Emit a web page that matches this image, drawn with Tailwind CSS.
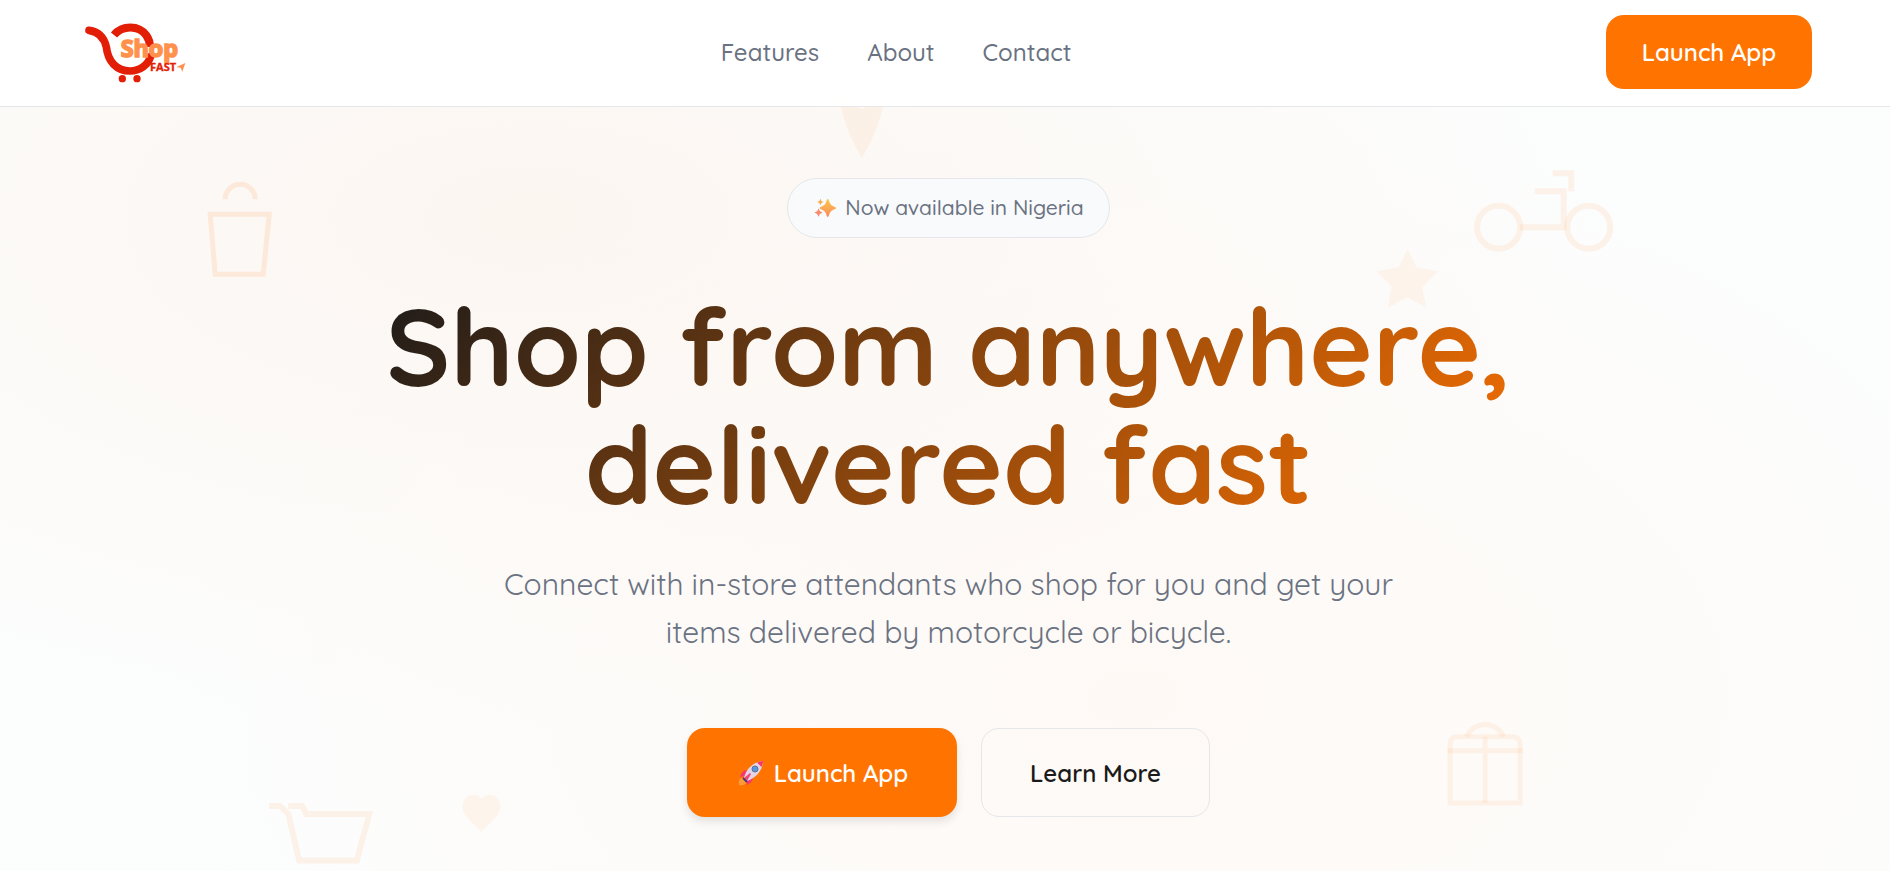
<!DOCTYPE html>
<html lang="en">
<head>
    <meta charset="UTF-8">
    <meta name="viewport" content="width=device-width, initial-scale=1.0">
    <title>ShopFast</title>
    <script src="https://cdn.jsdelivr.net/npm/@tailwindcss/browser@4"></script>
</head>
<body class="font-['Quicksand','Lato',sans-serif] bg-[#fcfdfd] text-gray-500">

    <div class="relative min-h-screen overflow-hidden bg-[radial-gradient(ellipse_at_28%_25%,#fcf6f1_0%,transparent_55%),radial-gradient(ellipse_at_60%_80%,#fef9f5_0%,transparent_60%)]">

        <!-- faint shopping doodles behind the hero -->
        <svg class="absolute inset-0 w-full h-full" viewBox="0 0 1890 871" preserveAspectRatio="xMidYMin slice" fill="none" stroke-width="5" aria-hidden="true">
            <g stroke="#ff7300" stroke-opacity=".11">
                <path d="M226 199a15 15 0 0 1 30 0M211 214H270L264 274H216Z"/>
            </g>
            <g stroke="#ff7300" stroke-opacity=".08" stroke-width="6">
                <circle cx="1498" cy="227" r="21.5"/>
                <circle cx="1588" cy="227" r="21.5"/>
                <path d="M1519 227H1563V191H1534M1552 173H1570.500V191"/>
                <path d="M270 805H281L289 813L300 859.500H357.500L370 813H307L303 805H289"/>
            </g>
            <g stroke="#ff7300" stroke-opacity=".07">
                <path d="M1449.500 802V744Q1449.500 736 1457.500 736H1511.500Q1519.500 736 1519.500 744V802Z"/>
                <path d="M1484.500 736V802M1447 750H1522M1466 736A20 20 0 0 1 1503 736"/>
            </g>
            <g fill="#ff7300" fill-opacity=".06">
                <path d="M1407 248.500L1416 267L1438 271L1422 287L1425.500 307.500L1407 297L1387.500 307.500L1391 286L1376 271L1398 267Z"/>
                <path d="M482 797.500C474 790 463 795 463 806C463 815 474 822 482 831C490 822 501 815 501 806C501 795 490 790 482 797.500Z"/>
                <path d="M862 109C848 101 838 90 841 107C845 126 853 143 862 158C871 143 879 126 883 107C886 90 876 101 862 109Z"/>
            </g>
        </svg>

        <header class="relative z-10 flex items-center justify-between h-[107px] pl-[84px] pr-[78px] pb-[2px] bg-white/95 border-b border-gray-200">
            <a href="#" aria-label="ShopFast">
                <svg class="w-[102px] h-[64px]" viewBox="42 27 306 192">
                    <path d="M57 58C88 62 103 82 109 108C114 152 140 180 180 180C210 180 234 162 242 136" fill="none" stroke="#e31e06" stroke-width="23" stroke-linecap="round"/>
                    <path d="M132 72C157 42 206 42 229 73C236 83 240 94 240 108" fill="none" stroke="#e31e06" stroke-width="24"/>
                    <circle cx="157" cy="203" r="11" fill="#e31e06"/>
                    <circle cx="201" cy="203" r="11" fill="#e31e06"/>
                    <text x="152" y="137" font-family="Open Sans, sans-serif" font-weight="700" font-size="70" fill="#ff914d" stroke="#ff914d" stroke-width="5">Shop</text>
                    <text x="240" y="180" font-family="Open Sans, sans-serif" font-weight="700" font-size="33" fill="#e31e06" stroke="#e31e06" stroke-width="1">FAST</text>
                    <path d="M319 168L346 156L337 182L332 170Z" fill="#ff914d"/>
                </svg>
            </a>
            <nav class="flex gap-12 text-[24px] leading-[36px] font-medium">
                <a href="#features">Features</a>
                <a href="#about">About</a>
                <a href="#contact">Contact</a>
            </nav>
            <button class="w-[206px] h-[74px] rounded-[18px] bg-[#ff7300] text-white text-[24px] font-semibold">Launch App</button>
        </header>

        <main class="relative flex flex-col items-center pl-[7px] pt-[71px] pb-[55px] text-center">
            <div class="flex items-center gap-2 h-[60px] px-[25px] rounded-full border border-gray-200 bg-[#f9fafc] text-[21px] font-medium">
                <svg class="w-6 h-6" viewBox="-1 -1 26 26" aria-hidden="true">
                    <defs>
                        <linearGradient id="spark" x1="0" y1="0" x2="0" y2="1">
                            <stop offset="0" stop-color="#fbc84a"/>
                            <stop offset="1" stop-color="#fb8a5c"/>
                        </linearGradient>
                    </defs>
                    <path d="M15 2Q16 2 17 6Q18 9 21 10Q24 11 24 12Q24 13 21 14Q18 15 17 18Q16 22 15 22Q14 22 13 18Q12 15 9 14Q6 13 6 12Q6 11 9 10Q12 9 13 6Q14 2 15 2Z" fill="url(#spark)"/>
                    <path d="M7 2L8 4.500L10.500 5.500L8 6.500L7 9L6 6.500L3.500 5.500L6 4.500Z" fill="#f9a94a"/>
                    <path d="M5 12.500L6.500 15.500L9.500 17L6.500 18.500L5 21.500L3.500 18.500L.5 17L3.500 15.500Z" fill="#fb8a6c"/>
                </svg>
                <span>Now available in Nigeria</span>
            </div>

            <h1 class="max-w-[1170px] w-full mt-[49px] text-[108px] leading-[118px] font-bold text-transparent bg-clip-text bg-[linear-gradient(135deg,#1a1a1a,#ff7300)]">
                Shop from anywhere,<br>delivered fast
            </h1>

            <p class="max-w-[940px] mt-[37px] text-[30px] leading-[48px]">
                Connect with in-store attendants who shop for you and get your<br>items delivered by motorcycle or bicycle.
            </p>

            <div class="flex gap-6 mt-[72px] text-[24px] font-semibold">
                <button class="flex items-center justify-center gap-2.5 w-[270px] h-[89px] pl-[2px] rounded-[18px] bg-[#ff7300] text-white shadow-[0_5px_8px_rgba(0,0,0,0.1)]">
                    <svg class="w-[26px] h-[26px]" viewBox="0 0 26 26" aria-hidden="true">
                        <path d="M6 18L8 23Q6 26 1 25Q0 20 3 18Z" fill="#ff9a3c"/>
                        <path d="M9 10Q4 10 2 17L7 16ZM15 17Q15 22 9 25L9 20Z" fill="#f5386c"/>
                        <path d="M6 18C8 9 15 2 25 1C25 10 18 18 9 21Z" fill="#e3d5e6"/>
                        <path d="M19 2.500Q22 1 25 1Q25 4 23.500 7Z" fill="#f5386c"/>
                        <path d="M6 18L12 13L13 14L9 21Z" fill="#f0477c"/>
                        <path d="M5 18L9 22" stroke="#4b3b6b" stroke-width="2"/>
                        <circle cx="17" cy="9" r="3" fill="#4f9be8" stroke="#6d6a86"/>
                    </svg>
                    Launch App
                </button>
                <button class="w-[229px] h-[89px] rounded-[18px] border border-gray-200 text-[#1a1a1a]">Learn More</button>
            </div>
        </main>
    </div>

</body>
</html>
